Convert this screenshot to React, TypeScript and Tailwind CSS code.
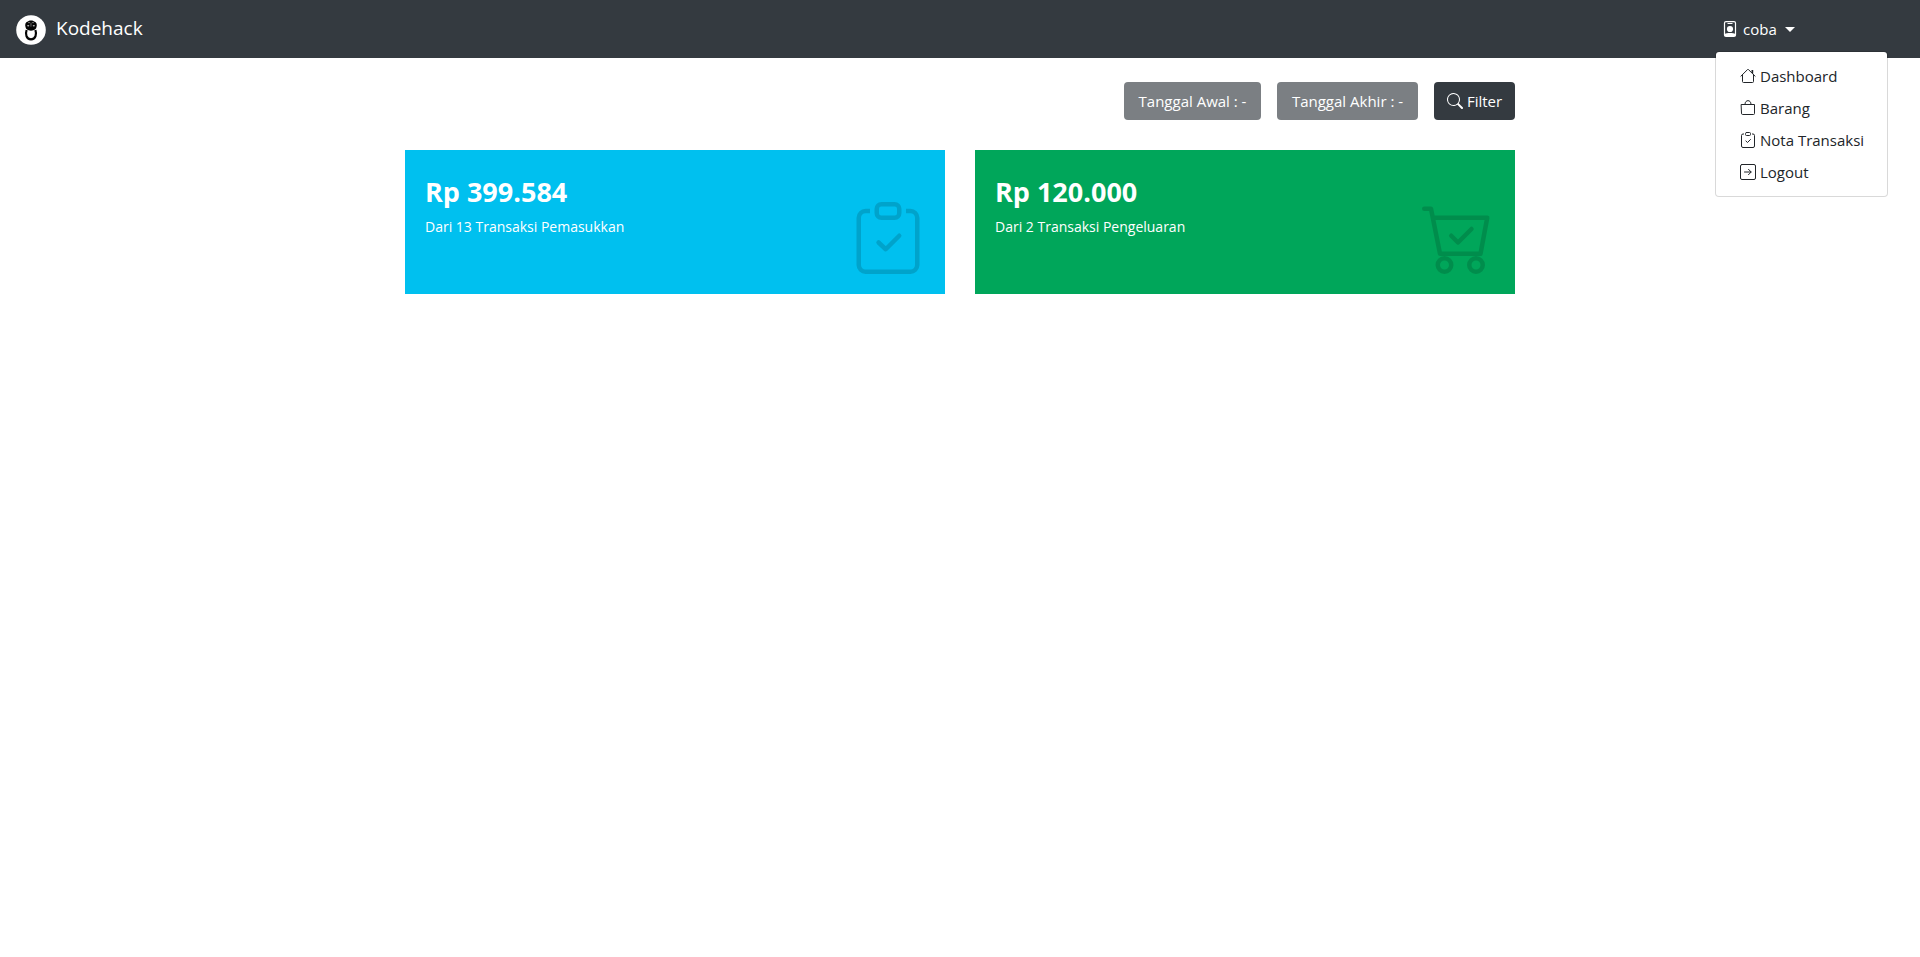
import React from 'react';
import { BsSearch } from 'react-icons/bs';

function Logo() {
  return (
    <svg viewBox="0 0 30 30" className="size-[30px]" aria-hidden="true">
      <circle cx="15" cy="15" r="14.8" fill="#fff" />
      <path d="M11.8 6.5C12.6 5 17.4 5 18.2 6.5C20.6 7.3 21.3 9.4 20.5 12C20.1 14.3 18.7 15.4 15 15.8C11.3 15.4 9.9 14.3 9.5 12C8.7 9.4 9.4 7.3 11.8 6.5Z" fill="#050505" />
      <path d="M10.6 15C9.2 19 10.2 24.2 15 24.4C19.8 24.2 20.8 19 19.4 15" fill="none" stroke="#050505" strokeWidth="2.2" />
      <path d="M12 7.6H14.2M15.8 7.6H18" stroke="#999" strokeWidth="0.7" />
      <ellipse cx="12.2" cy="10.7" rx="1.1" ry="0.8" fill="#bbb" />
      <ellipse cx="17.8" cy="10.7" rx="1.1" ry="0.8" fill="#bbb" />
      <path d="M14.5 8.2H15.5L15.3 11.8H14.7Z" fill="#888" />
    </svg>
  );
}

function Badge() {
  return (
    <svg viewBox="0 0 14 16" className="h-4 w-[14px] shrink-0" aria-hidden="true">
      <rect x="1.5" y="0.6" width="11" height="14.8" rx="1.5" fill="none" stroke="currentColor" strokeWidth="1.2" />
      <path d="M4.5 2.5H9.5" stroke="currentColor" strokeWidth="1" />
      <circle cx="7" cy="8" r="3.1" fill="currentColor" />
      <path d="M1.5 13.2C3 12.2 4.5 12 7 12S11 12.2 12.5 13.2V15H1.5Z" fill="currentColor" />
    </svg>
  );
}

interface IconProps {
  className: string;
  children?: React.ReactNode;
}

function LineIcon({ className, children }: IconProps) {
  return (
    <svg viewBox="0 0 16 16" className={className} fill="none" stroke="currentColor" strokeLinecap="round" strokeLinejoin="round" aria-hidden="true">
      {children}
    </svg>
  );
}

function House({ className }: IconProps) {
  return (
    <LineIcon className={className}>
      <path d="M0.9 8.2L7.6 1.5Q8 1.1 8.4 1.5L15.1 8.2" />
      <path d="M2.5 7V13.5A1 1 0 0 0 3.5 14.5H12.5A1 1 0 0 0 13.5 13.5V7" />
      <path d="M11.5 2H13.2V6L11.5 4.3Z" fill="currentColor" stroke="none" />
    </LineIcon>
  );
}

function Bag({ className }: IconProps) {
  return (
    <LineIcon className={className}>
      <path d="M1.5 4.5H14.5V13.5A1 1 0 0 1 13.5 14.5H2.5A1 1 0 0 1 1.5 13.5Z" />
      <path d="M5 4C5 -0.6 11 -0.6 11 4" />
    </LineIcon>
  );
}

function ClipboardCheck({ className }: IconProps) {
  return (
    <LineIcon className={className}>
      <path d="M4 2H3A1.5 1.5 0 0 0 1.5 3.5V14A1.5 1.5 0 0 0 3 15.5H13A1.5 1.5 0 0 0 14.5 14V3.5A1.5 1.5 0 0 0 13 2H12" strokeLinecap="butt" />
      <rect x="5.5" y="0.5" width="5" height="3" rx="1" />
      <path d="M5.9 9L7.5 10.5L10.5 7.5" />
    </LineIcon>
  );
}

function ArrowSquare({ className }: IconProps) {
  return (
    <LineIcon className={className}>
      <rect x="0.5" y="0.5" width="15" height="15" rx="1.5" />
      <path d="M4.5 8H11M8.5 5.3L11.2 8L8.5 10.7" />
    </LineIcon>
  );
}

function CartCheck({ className }: IconProps) {
  return (
    <LineIcon className={className}>
      <path d="M0.5 1.5H2L4 11.5H13L14.5 3.5H2.4" />
      <path d="M6.5 7.5L8 9L11 6" />
      <circle cx="5" cy="14" r="1.5" />
      <circle cx="12" cy="14" r="1.5" />
    </LineIcon>
  );
}

const menu = [
  { label: 'Dashboard', icon: <House className="size-4 shrink-0" /> },
  { label: 'Barang', icon: <Bag className="size-4 shrink-0" /> },
  { label: 'Nota Transaksi', icon: <ClipboardCheck className="size-4 shrink-0" /> },
  { label: 'Logout', icon: <ArrowSquare className="size-4 shrink-0" /> },
];

interface StatProps {
  amount: string;
  note: string;
  color: string;
  icon: React.ReactNode;
}

function Stat({ amount, note, color, icon }: StatProps) {
  return (
    <section className={`flex h-36 justify-between py-5 pr-[21px] pl-5 text-white ${color}`}>
      <div className="pt-1">
        <h2 className="text-[27px] leading-9 font-bold">{amount}</h2>
        <p className="mt-[5px] text-[14px] leading-6">{note}</p>
      </div>
      <div className="self-end text-black/15">{icon}</div>
    </section>
  );
}

export default function App() {
  return (
    <div className="min-h-screen bg-white font-['Open_Sans','Noto_Sans',sans-serif] text-[15px] leading-6 text-[#212529]">
      <nav className="flex h-[58px] items-center justify-between bg-[#343a40] px-4 text-white">
        <a href="#" className="flex items-center gap-[10px] text-[19px]">
          <span className="pt-[2px]"><Logo /></span>
          <span className="pb-[2px]">Kodehack</span>
        </a>
        <div className="relative mr-[101px]">
          <button type="button" aria-expanded="true" className="flex w-[88px] items-center px-2 py-2">
            <Badge />
            <span className="ml-1.5">coba</span>
            <svg viewBox="0 0 10 5" className="ml-2 h-[5px] w-[10px] shrink-0" fill="currentColor" aria-hidden="true">
              <path d="M0 0H10L5 5Z" />
            </svg>
          </button>
          <ul className="absolute top-full left-0 mt-0.5 w-[173px] rounded border border-black/15 bg-white bg-clip-padding py-2 text-[#212529]">
            {menu.map((item) => (
              <li key={item.label}>
                <a href="#" className="flex items-center gap-1 px-6 py-1 whitespace-nowrap">
                  {item.icon}
                  {item.label}
                </a>
              </li>
            ))}
          </ul>
        </div>
      </nav>
      <main className="mx-auto max-w-[1140px] px-[15px] pt-6">
        <div className="flex justify-end gap-4 text-white">
          <button type="button" className="h-[38px] w-[137px] rounded bg-[#7b7f83] whitespace-nowrap">Tanggal Awal : -</button>
          <button type="button" className="h-[38px] w-[141px] rounded bg-[#7b7f83] whitespace-nowrap">Tanggal Akhir : -</button>
          <button type="button" className="flex h-[38px] w-[81px] items-center justify-center gap-1 rounded bg-[#343a40]">
            <BsSearch className="size-4" />
            Filter
          </button>
        </div>
        <div className="mt-[30px] grid grid-cols-2 gap-[30px]">
          <Stat amount="Rp 399.584" note="Dari 13 Transaksi Pemasukkan" color="bg-[#00c0ef]" icon={<ClipboardCheck className="size-[72px]" />} />
          <Stat amount="Rp 120.000" note="Dari 2 Transaksi Pengeluaran" color="bg-[#00a65a]" icon={<CartCheck className="size-[72px]" />} />
        </div>
      </main>
    </div>
  );
}
